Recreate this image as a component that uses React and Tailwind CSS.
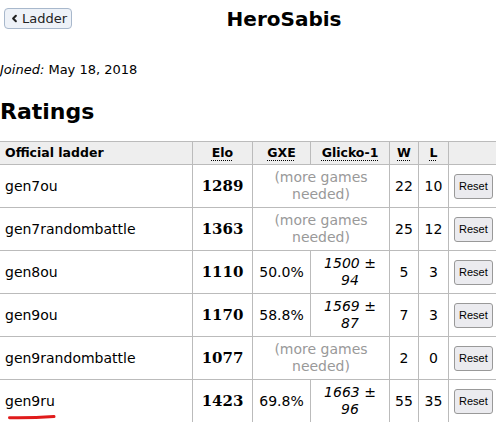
import { ChevronLeft } from "lucide-react";

const rows = [
  { format: "gen7ou", elo: 1289, w: 22, l: 10 },
  { format: "gen7randombattle", elo: 1363, w: 25, l: 12 },
  { format: "gen8ou", elo: 1110, gxe: "50.0%", glicko: "1500", dev: "94", w: 5, l: 3 },
  { format: "gen9ou", elo: 1170, gxe: "58.8%", glicko: "1569", dev: "87", w: 7, l: 3 },
  { format: "gen9randombattle", elo: 1077, w: 2, l: 0 },
  { format: "gen9ru", elo: 1423, gxe: "69.8%", glicko: "1663", dev: "96", w: 55, l: 35, marked: true },
];

const cell = "border border-[#bbb] px-[5px] py-[4px]";
const abbr = "underline decoration-dotted decoration-1 underline-offset-[3px]";

export default function App() {
  return (
    <div className="w-[496px] h-[422px] overflow-hidden bg-white text-black text-[13px] font-['DejaVu_Sans',Verdana,sans-serif]">
      <div className="pt-[8px] h-[30px]">
        <button className="float-left ml-[4px] flex items-center gap-[2px] h-[21px] pl-[4px] pr-[4px] rounded-[4px] border border-[#a8b8cc] bg-[#eef2f8] text-[13px] text-[#222]">
          <ChevronLeft size={11} strokeWidth={4.5} />
          Ladder
        </button>
        <h1 className="text-center text-[20px] leading-[22px] font-bold">HeroSabis</h1>
      </div>

      <p className="mt-[32px] leading-[16px]">
        <em>Joined:</em> May 18, 2018
      </p>

      <h2 className="mt-[21px] text-[22px] leading-[26px] font-bold">Ratings</h2>

      <table className="mt-[16px] ml-[-1px] table-fixed border-collapse w-[498px] text-[14px]">
        <colgroup>
          <col className="w-[193px]" />
          <col className="w-[60px]" />
          <col className="w-[58px]" />
          <col className="w-[79px]" />
          <col className="w-[29px]" />
          <col className="w-[30px]" />
          <col className="w-[49px]" />
        </colgroup>
        <thead>
          <tr className="bg-[#eeeeee] text-[12.5px] h-[23px]">
            <th className="border border-[#bbb] px-[5px] text-left">Official ladder</th>
            <th className="border border-[#bbb]"><span className={abbr}>Elo</span></th>
            <th className="border border-[#bbb]"><span className={abbr}>GXE</span></th>
            <th className="border border-[#bbb]"><span className={abbr}>Glicko-1</span></th>
            <th className="border border-[#bbb]"><span className={abbr}>W</span></th>
            <th className="border border-[#bbb]"><span className={abbr}>L</span></th>
            <th className="border border-[#bbb]"></th>
          </tr>
        </thead>
        <tbody>
          {rows.map((r) => (
            <tr key={r.format} className="h-[43px]">
              <td className={cell}>
                <span className="relative">
                  {r.format}
                  {r.marked && (
                    <svg className="absolute left-[3px] top-[21px]" width="48" height="6" viewBox="0 0 48 6">
                      <path d="M1.5 3.8 C 14 4, 32 3.6, 46 2.6" stroke="#e01b1b" strokeWidth="3" strokeLinecap="round" fill="none" />
                    </svg>
                  )}
                </span>
              </td>
              <td className={`${cell} text-center font-bold text-[15px] font-['DejaVu_Serif',Georgia,serif]`}>{r.elo}</td>
              {r.gxe ? (
                <>
                  <td className={`${cell} text-center`}>{r.gxe}</td>
                  <td className={`${cell} text-center leading-[17px]`}>
                    <em>{r.glicko}</em> ± <em>{r.dev}</em>
                  </td>
                </>
              ) : (
                <td colSpan={2} className={`${cell} text-center text-[#999] leading-[17px]`}>
                  (more games needed)
                </td>
              )}
              <td className={`${cell} text-center px-0`}>{r.w}</td>
              <td className={`${cell} text-center px-0`}>{r.l}</td>
              <td className={`${cell} px-[4px]`}>
                <button className="h-[25px] px-[4px] rounded-[3px] border border-[#999] bg-[#ebebef] text-[11px] font-['Liberation_Sans',Arial,sans-serif]">
                  Reset
                </button>
              </td>
            </tr>
          ))}
        </tbody>
      </table>
    </div>
  );
}
